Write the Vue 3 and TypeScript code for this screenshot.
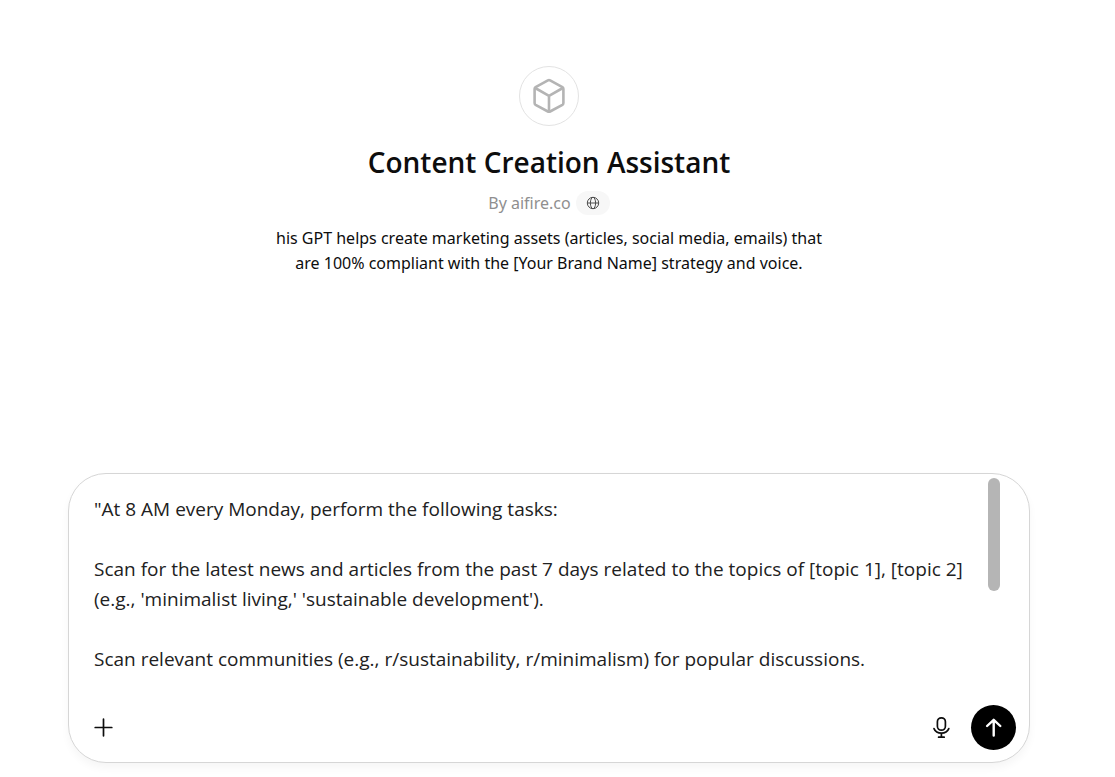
<script setup lang="ts">
import { ref } from 'vue'

const description = [
  'his GPT helps create marketing assets (articles, social media, emails) that',
  'are 100% compliant with the [Your Brand Name] strategy and voice.',
]

const prompt = ref(
  [
    '"At 8 AM every Monday, perform the following tasks:',
    '',
    "Scan for the latest news and articles from the past 7 days related to the topics of [topic 1], [topic 2] (e.g., 'minimalist living,' 'sustainable development').",
    '',
    'Scan relevant communities (e.g., r/sustainability, r/minimalism) for popular discussions.',
  ].join('\n'),
)
</script>

<template>
  <main class="page">
    <header class="intro">
      <div class="avatar">
        <svg width="36" height="36" viewBox="0 0 36 36" fill="none" stroke="#b4b4b4" stroke-width="2.6" stroke-linejoin="round" stroke-linecap="round" aria-hidden="true">
          <path d="M16.9 2.4 L4.6 9.2 Q3.6 9.8 3.6 11 V25 Q3.6 26.2 4.6 26.8 L16.9 33.5 Q18 34.1 19.1 33.5 L31.4 26.8 Q32.4 26.2 32.4 25 V11 Q32.4 9.8 31.4 9.2 L19.1 2.4 Q18 1.8 16.9 2.4 Z" />
          <path d="M4.2 10 L18 17.8 L31.8 10 M18 17.8 V33.5" />
        </svg>
      </div>
      <h1 class="title">Content Creation Assistant</h1>
      <div class="byline">
        <span>By aifire.co</span>
        <a class="site" href="#" aria-label="Website">
          <svg width="14" height="14" viewBox="0 0 14 14" fill="none" stroke="#4d4d4d" stroke-width="1" aria-hidden="true">
            <circle cx="7" cy="7" r="5.7" />
            <ellipse cx="7" cy="7" rx="2.6" ry="5.7" />
            <path d="M1.3 7 H12.7" />
          </svg>
        </a>
      </div>
      <p class="description">
        <span v-for="line in description" :key="line" class="line">{{ line }}</span>
      </p>
    </header>

    <form class="composer" @submit.prevent>
      <div class="editor">
        <textarea v-model="prompt" class="prompt" rows="6" aria-label="Prompt" spellcheck="false"></textarea>
        <div class="thumb"></div>
      </div>
      <div class="actions">
        <button class="icon-button" type="button" aria-label="Add files">
          <svg width="20" height="20" viewBox="0 0 20 20" fill="none" stroke="#0d0d0d" stroke-width="1.7" stroke-linecap="round" aria-hidden="true">
            <path d="M9.5 1.2 V17.8 M1.2 9.5 H17.8" />
          </svg>
        </button>
        <div class="right">
          <button class="icon-button" type="button" aria-label="Dictate">
            <svg width="20" height="24" viewBox="0 0 20 24" fill="none" stroke="#0d0d0d" stroke-width="1.7" stroke-linecap="round" aria-hidden="true">
              <rect x="6.4" y="1.8" width="8" height="12.4" rx="4" />
              <path d="M3 12.6 C4.2 15.5 7 17.2 10.4 17.2 C13.8 17.2 16.6 15.5 17.8 12.6 M10.4 17.2 V21 M7.6 21.2 H13.2" />
            </svg>
          </button>
          <button class="send" type="submit" aria-label="Send">
            <svg width="20" height="22" viewBox="0 0 20 22" fill="none" stroke="#fff" stroke-width="2.4" stroke-linecap="round" stroke-linejoin="round" aria-hidden="true">
              <path d="M9.7 18.6 V3.2 M3.1 9 L9.7 2.8 L16.3 9" />
            </svg>
          </button>
        </div>
      </div>
    </form>
  </main>
</template>

<style>
body {
  background: #fff;
}
</style>

<style scoped>
.page {
  box-sizing: border-box;
  min-height: 100vh;
  padding: 66px 85px 14px 68px;
  display: flex;
  flex-direction: column;
  justify-content: space-between;
  font-family: "Segoe UI", "Open Sans", "Noto Sans", sans-serif;
  color: #0d0d0d;
}

.intro {
  display: flex;
  flex-direction: column;
  align-items: center;
}

.avatar {
  box-sizing: border-box;
  width: 60px;
  height: 60px;
  border: 1px solid #e3e3e3;
  border-radius: 50%;
  display: flex;
  align-items: center;
  justify-content: center;
}

.title {
  margin: 16px 0 0;
  font-size: 28px;
  line-height: 40px;
  font-weight: 600;
  white-space: nowrap;
}

.byline {
  margin-top: 9px;
  display: flex;
  align-items: center;
  gap: 5px;
  font-family: "Segoe UI", "Noto Sans", sans-serif;
  font-size: 16px;
  line-height: 24px;
  color: #8f8f8f;
}

.site {
  width: 34px;
  height: 24px;
  border-radius: 12px;
  background: #f7f7f7;
  display: flex;
  align-items: center;
  justify-content: center;
}

.description {
  margin: 11px 0 0;
  font-family: "Segoe UI", "Noto Sans", sans-serif;
  font-size: 16px;
  line-height: 25px;
  text-align: center;
}

.line {
  display: block;
}

.composer {
  box-sizing: border-box;
  padding: 4px 13px 12px 25px;
  border: 1px solid #d6d6d6;
  border-radius: 38px;
  background: #fff;
  box-shadow: 0 5px 8px rgba(0, 0, 0, 0.04);
}

.editor {
  display: flex;
  align-items: flex-start;
  gap: 15px;
  padding-right: 16px;
}

.prompt {
  flex: 1;
  min-width: 0;
  height: 180px;
  margin: 16px 0 0;
  padding: 0;
  border: 0;
  outline: 0;
  resize: none;
  overflow: hidden;
  background: transparent;
  font-family: inherit;
  font-size: 19px;
  line-height: 30px;
  color: #212121;
}

.thumb {
  width: 12px;
  height: 113px;
  border-radius: 6px;
  background: #b5b5b5;
}

.actions {
  margin-top: 31px;
  display: flex;
  align-items: center;
  justify-content: space-between;
}

.right {
  display: flex;
  align-items: center;
  gap: 20px;
}

button {
  margin: 0;
  padding: 0;
  border: 0;
  background: transparent;
  display: flex;
  align-items: center;
  justify-content: center;
  cursor: pointer;
}

.icon-button {
  width: 20px;
  height: 24px;
}

.send {
  width: 45px;
  height: 45px;
  border-radius: 50%;
  background: #000;
}
</style>
